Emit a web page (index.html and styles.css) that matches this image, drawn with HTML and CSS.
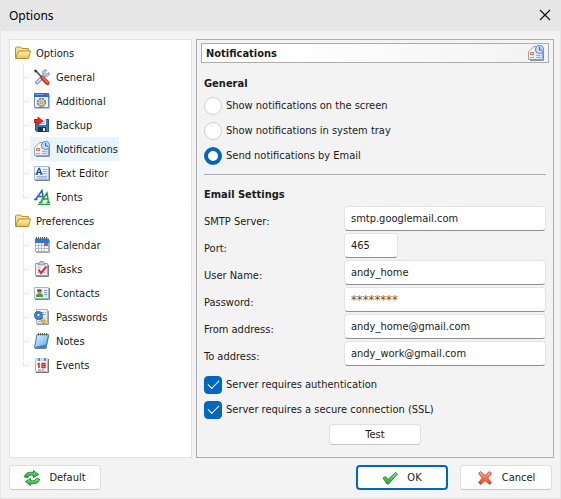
FILE: index.html
```html
<!DOCTYPE html>
<html lang="en">
<head>
<meta charset="utf-8">
<title>Options</title>
<link rel="stylesheet" href="styles.css">
</head>
<body>
<svg class="defs" aria-hidden="true">
  <defs>
    <linearGradient id="gFolder" x1="0" y1="0" x2="0" y2="1"><stop offset="0" stop-color="#fff3b0"/><stop offset="1" stop-color="#e9c04d"/></linearGradient>
    <linearGradient id="gBlue" x1="0" y1="0" x2="1" y2="1"><stop offset="0" stop-color="#e6f3ff"/><stop offset="1" stop-color="#5aa9ea"/></linearGradient>
    <linearGradient id="gPaper" x1="0" y1="0" x2="1" y2="1"><stop offset="0" stop-color="#fff"/><stop offset="1" stop-color="#d3e2f5"/></linearGradient>
    <linearGradient id="gGreen" x1="0" y1="0" x2="0" y2="1"><stop offset="0" stop-color="#8be58a"/><stop offset="1" stop-color="#23a032"/></linearGradient>
    <linearGradient id="gRed" x1="0" y1="0" x2="0" y2="1"><stop offset="0" stop-color="#ffa68c"/><stop offset="1" stop-color="#ee3f1d"/></linearGradient>
    <symbol id="folder" viewBox="0 0 16 16">
      <path d="M.500 12.500V3L1.500 2H5.500L7 3.500H13.500V6" fill="#f6e08c" stroke="#b8923a"/>
      <path d="M.500 13.500L3.500 6H15.500L13.500 13.500Z" fill="url(#gFolder)" stroke="#b58d2c"/>
    </symbol>
    <symbol id="mail" viewBox="0 0 16 16">
      <path d="M2 15.500H15.500V6" fill="none" stroke="#8b8f96"/>
      <path d="M.500 14.500V6.500L6 1.500H11L14.500 6V14.500Z" fill="url(#gPaper)" stroke="#8ea2c0"/>
      <path d="M2 7H6V10H2Z" fill="#f0803c"/><path d="M3 8.500H5" stroke="#ffd0a8"/>
      <path d="M2 12.500H6M8 10.500H13M8 12.500H13" stroke="#8fb0dc"/>
      <circle cx="11.500" cy="4.500" r="4" fill="#c7dcfb" stroke="#6b92e4" stroke-width="1.200"/>
      <path d="M11.500 2V5H14" fill="none" stroke="#3a5cab"/>
    </symbol>
  </defs>
</svg>
<div class="window">
  <header class="titlebar">
    <h1>Options</h1>
    <button class="close" type="button" aria-label="Close"><svg width="12" height="12" viewBox="0 0 12 12"><path d="M1 1L11 11M11 1L1 11" stroke="#111" stroke-width="1.200"/></svg></button>
  </header>
  <main class="content">
    <nav class="tree" aria-label="Sections">
      <ul class="roots">
        <li>
          <div class="group"><svg class="icon"><use href="#folder"/></svg>Options</div>
          <ul class="children">
            <li><a href="#general"><svg class="icon" viewBox="0 0 16 16"><path d="M10.500 6L3 13.500" stroke="#5c83ad" stroke-width="3.600" stroke-linecap="round"/><path d="M10.500 6L3 13.500" stroke="#cfe2f3" stroke-width="1.800" stroke-linecap="round"/><path d="M15 3.500L12.500 5L11 3.500L12.500 1C9.500.300 7.800 2.500 8.800 5.200L11 7.300C14 7.800 15.900 6 15 3.500Z" fill="#b9d3ec" stroke="#668db8" stroke-width=".800"/><path d="M1 1L8 8.500" stroke="#555" stroke-width="1.800"/><path d="M.800 1.200L2.500 3" stroke="#333" stroke-width="2.400"/><path d="M8.500 9L13.500 14" stroke="#c92e1a" stroke-width="4" stroke-linecap="round"/><path d="M8.700 8.700L13.700 13.600" stroke="#ff6a48" stroke-width="1.700" stroke-linecap="round"/></svg>General</a></li>
            <li><a href="#additional"><svg class="icon" viewBox="0 0 16 16"><path d="M1 15.500H15.500V2" fill="none" stroke="#b9bdc4"/><path d="M.500.500H14.500V14.500H.500Z" fill="#edf4ff" stroke="#6692d4"/><path d="M0 0H15V4H0Z" fill="#2c69d7"/><path d="M1 1H10V2H1Z" fill="#6fa3f5"/><path d="M12 1H14V3H12Z" fill="#f33b1b"/><circle cx="7.500" cy="9.500" r="3.900" fill="#c9bda8" stroke="#7b7060" stroke-width="1.500" stroke-dasharray="2 1.060"/><circle cx="7.500" cy="9.500" r="3.200" fill="#e2d9c8" stroke="#a39781" stroke-width=".700"/><circle cx="7.500" cy="9.500" r="1.200" fill="#fff" stroke="#776b58" stroke-width=".800"/></svg>Additional</a></li>
            <li><a href="#backup"><svg class="icon" viewBox="0 0 16 16"><path d="M1 2H15V15H3L1 13Z" fill="#3277c0"/><path d="M1.500 2.500H14.500V14.500H3L1.500 13Z" fill="none" stroke="#1f528f"/><path d="M4 2H12V8H4Z" fill="#eff5fc"/><path d="M9 4.500H11M6 6.500H11" stroke="#9bb2cc"/><path d="M4 10H12V15H4Z" fill="#263241"/><path d="M9 11H11V14H9Z" fill="#e9eff5"/><path d="M0 2.500H4V0L9 4L4 8V5.500H0Z" fill="#f5291d" stroke="#a5140d" stroke-width=".700"/></svg>Backup</a></li>
            <li><a class="selected" href="#notifications" aria-current="page"><svg class="icon"><use href="#mail"/></svg>Notifications</a></li>
            <li><a href="#text-editor"><svg class="icon" viewBox="0 0 16 16"><path d="M1 15.500H15.500V2" fill="none" stroke="#777d87"/><path d="M.500 1.500H14.500V14.500H.500Z" fill="url(#gPaper)" stroke="#a9b9d0"/><path d="M2.500 9L4.800 3.500H5.500L7.500 9M3.500 7.300H7M1.500 9H4M6.200 9H8.500" fill="none" stroke="#1c4eaa" stroke-width="1.300"/><path d="M9 4.500H13M9 6.500H13M9 8.500H13M2.500 11.500H13M2.500 13H13" stroke="#91abd0" stroke-width=".900"/></svg>Text Editor</a></li>
            <li><a href="#fonts"><svg class="icon" viewBox="0 0 16 16"><path d="M1.500 10.500L8 1.500L9.500 10.500M3.800 7.500H9M0 10.500H3.500M7.500 10.500H10.500" fill="none" stroke="#2462c8" stroke-width="1.500"/><path d="M6.500 13.500L13 4L14.500 13.500M8.500 10H14M5 13.500H8.500M12.500 13.500H16M4 15.500H16" fill="none" stroke="#19a63c" stroke-width="1.500"/></svg>Fonts</a></li>
          </ul>
        </li>
        <li>
          <div class="group"><svg class="icon"><use href="#folder"/></svg>Preferences</div>
          <ul class="children">
            <li><a href="#calendar"><svg class="icon" viewBox="0 0 16 16"><path d="M2 15.500H15.500V3" fill="none" stroke="#a5a9b2"/><path d="M1.500 1.500H14.500V14.500H1.500Z" fill="#fff" stroke="#9cb2cf"/><path d="M1 2H15V6H1Z" fill="#2879d8"/><path d="M2.500 0V2.500M4.500 0V2.500M6.500 0V2.500M8.500 0V2.500M10.500 0V2.500M12.500 0V2.500" stroke="#555c69"/><path d="M2 8.500H14M2 11.500H14M4.500 6V14M7.500 6V14M10.500 6V14" stroke="#a9c0df"/><path d="M10 6H14V9H10Z" fill="#ee4b26"/></svg>Calendar</a></li>
            <li><a href="#tasks"><svg class="icon" viewBox="0 0 16 16"><path d="M2 15.500H14.500V4" fill="none" stroke="#777b82"/><path d="M1.500 2.500H13.500V14.500H1.500Z" fill="#eef4fb" stroke="#91a1b4"/><path d="M4 4V2H6V.500H9V2H11V4Z" fill="#cdd4dc" stroke="#747f8c" stroke-width=".700"/><path d="M3.500 6.500H7M3.500 11.500H5M9.500 11.500H12" stroke="#a8bad2"/><path d="M4.500 8.500L7 12L12.500 5.500" fill="none" stroke="#e32a2a" stroke-width="2"/></svg>Tasks</a></li>
            <li><a href="#contacts"><svg class="icon" viewBox="0 0 16 16"><path d="M1 14.500H15.500V3" fill="none" stroke="#7b818a"/><path d="M.500 2.500H14.500V13.500H.500Z" fill="url(#gPaper)" stroke="#a5b7cd"/><path d="M2 12V10L4 8.500H7L9 10V12Z" fill="#35a92f"/><circle cx="5.500" cy="6.800" r="2" fill="#c97946"/><path d="M3.200 7V4.500H7.500V7L6.800 5.800H4.200Z" fill="#55301b"/><path d="M10 5.500H13M10 7.500H13M10 9.500H13" stroke="#7ea3d4"/></svg>Contacts</a></li>
            <li><a href="#passwords"><svg class="icon" viewBox="0 0 16 16"><path d="M3 15.500H14.500V2" fill="none" stroke="#969ca5"/><path d="M2.500.500H13.500V14.500H2.500Z" fill="url(#gPaper)" stroke="#a5b3c6"/><path d="M8 3.500H10M11 3.500H12M9 5.500H12M4 12.500H7" stroke="#8caad2"/><path d="M6 8L11 14" stroke="#966d14" stroke-width="3"/><path d="M6 8L11 14M9 10.500L11 9M10.500 13L12.500 11.500" stroke="#f5c84b" stroke-width="1.600"/><circle cx="4.500" cy="6.500" r="4" fill="#4e8edb" stroke="#2459a4"/><circle cx="4.500" cy="6" r="1.800" fill="#d4e9ff" stroke="#276bbf"/></svg>Passwords</a></li>
            <li><a href="#notes"><svg class="icon" viewBox="0 0 16 16"><path d="M1 15.500H12L14.500 3" fill="none" stroke="#777e88"/><path d="M3 1.500H14.500L12 14.500H.500Z" fill="url(#gBlue)" stroke="#3c7ec4"/><path d="M1 14L12 11.500L11.500 14Z" fill="#2d86dc"/><path d="M4.500 0V2.500M6.500 0V2.500M8.500 0V2.500M10.500 0V2.500M12.500 0V2.500" stroke="#6b6340"/></svg>Notes</a></li>
            <li><a href="#events"><svg class="icon" viewBox="0 0 16 16"><path d="M2 15.500H14.500V2" fill="none" stroke="#6f747c"/><path d="M1.500 1.500H13.500V14.500H1.500Z" fill="#f7fbff" stroke="#a8bbd2"/><path d="M1 1H14V4H1Z" fill="#c8d9ed"/><path d="M4 1H6V4H4ZM10 1H12V4H10Z" fill="#6e8bac"/><path d="M3.500 7L5 6.500V11" fill="none" stroke="#e32626" stroke-width="1.500"/><path d="M8 6.500H11V10.500H8ZM8 8.500H11" fill="none" stroke="#e32626" stroke-width="1.300"/><path d="M4 13H7M8 13H10" stroke="#a82828" stroke-width=".800"/></svg>Events</a></li>
          </ul>
        </li>
      </ul>
    </nav>
    <section class="panel">
      <div class="panel-head"><h2>Notifications</h2><svg class="icon"><use href="#mail"/></svg></div>
      <form class="form" id="settings">
        <h3>General</h3>
        <label class="choice"><input type="radio" name="mode">Show notifications on the screen</label>
        <label class="choice"><input type="radio" name="mode">Show notifications in system tray</label>
        <label class="choice"><input type="radio" name="mode" checked>Send notifications by Email</label>
        <hr>
        <h3>Email Settings</h3>
        <div class="fields">
          <label for="smtp">SMTP Server:</label><input id="smtp" type="text" value="smtp.googlemail.com">
          <label for="port">Port:</label><input id="port" class="short" type="text" value="465">
          <label for="user">User Name:</label><input id="user" type="text" value="andy_home">
          <label for="pass">Password:</label><input id="pass" class="secret" type="text" value="********">
          <label for="from">From address:</label><input id="from" type="text" value="andy_home@gmail.com">
          <label for="to">To address:</label><input id="to" type="text" value="andy_work@gmail.com">
        </div>
        <label class="choice"><input type="checkbox" checked>Server requires authentication</label>
        <label class="choice"><input type="checkbox" checked>Server requires a secure connection (SSL)</label>
        <button class="btn test" type="button">Test</button>
      </form>
    </section>
  </main>
  <footer class="footer">
    <button class="btn" type="button"><svg class="icon" viewBox="0 0 16 16"><path d="M.500 7C1 3.500 4 1.500 9.500 2.500V.500L14.500 4.500L9.500 7.500V5.500C6.500 4.500 4.500 5.500 4 7.500Z" fill="url(#gGreen)" stroke="#16812a" stroke-width=".900"/><path d="M15.500 9C15 12.500 12 14.500 6.500 13.500V15.500L1.500 11.500L6.500 8.500V10.500C9.500 11.500 11.500 10.500 12 8.500Z" fill="url(#gGreen)" stroke="#16812a" stroke-width=".900"/></svg>Default</button>
    <button class="btn primary" type="submit" form="settings"><svg class="icon" viewBox="0 0 16 16"><path d="M1 8L3.500 6.500L6 9.500L13.500 2.500L15.500 4L6.500 14H5Z" fill="url(#gGreen)" stroke="#16812a" stroke-width=".900"/></svg>OK</button>
    <button class="btn" type="button"><svg class="icon" viewBox="0 0 16 16"><path d="M1.500 3.500L3.500 1.500L8 5.500L12.500 1.500L14.500 3.500L10.700 8L14.500 12.500L12.500 14.500L8 10.500L3.500 14.500L1.500 12.500L5.300 8Z" fill="url(#gRed)" stroke="#d04a2e" stroke-width=".900"/></svg>Cancel</button>
  </footer>
</div>
</body>
</html>
```
FILE: styles.css
```css
* { box-sizing: border-box; }

body {
  margin: 0;
  background: #f3f3f3;
  color: #1a1a1a;
  font: 11px/17px "DejaVu Sans Condensed", "DejaVu Sans", sans-serif;
}

button, input { font: inherit; color: inherit; }
ul { list-style: none; margin: 0; padding: 0; }
a { color: inherit; text-decoration: none; }
h1, h2, h3 { margin: 0; font-size: inherit; }

.defs { position: absolute; width: 0; height: 0; }
.icon { flex: none; width: 16px; height: 16px; }

.window {
  display: flex;
  flex-direction: column;
  min-height: 100vh;
  border: 1px solid #e6e6e6;
  border-top: 0;
}

.titlebar {
  display: flex;
  align-items: center;
  justify-content: space-between;
  height: 31px;
  padding: 0 7px 0 8px;
  background: #e6e6e6;
  color: #000;
}
.titlebar h1 { font: 12px/16px "Noto Sans", sans-serif; }
.close { display: flex; padding: 0 2px 2px; border: 0; background: none; }

.content {
  display: grid;
  grid-template-columns: 183px 1fr;
  gap: 4px;
  flex: 1;
  padding: 8px 6px 0 8px;
}

.tree { padding: 1px 5px; border: 1px solid #e3e3e3; background: #fff; }
.group { display: flex; align-items: center; gap: 5px; height: 24px; }
.children { margin-left: 8px; }
.children li {
  display: flex;
  align-items: center;
  height: 24px;
  background: repeating-linear-gradient(#dcdcdc 0 1px, #fff 1px 2px) left top / 1px 100% no-repeat;
}
.children li:last-child { background-size: 1px 50%; }
.children li::before { content: ""; width: 6px; border-top: 1px dotted #dcdcdc; }
.children li a { display: flex; align-items: center; gap: 6px; height: 24px; margin-left: 1px; padding: 0 1px 0 4px; }
.children .selected { background: #e9f5fe; }

.panel { padding: 3px 4px 10px; border: 1px solid #adadad; }
.panel-head {
  display: flex;
  align-items: center;
  justify-content: space-between;
  height: 20px;
  padding: 0 4px;
  border: 1px solid #adadad;
  background: linear-gradient(90deg, #fff 20%, #f3f3f3);
}
h2, h3 { font-weight: bold; }

.form { display: flex; flex-direction: column; padding: 10px 3px 0; }
.form h3 { height: 20px; line-height: 21px; }
.form hr { width: 100%; margin: 6px 0 9px; border: 0; border-top: 1px solid #adadad; }

.choice { display: flex; align-items: center; gap: 4px; height: 25px; }
.choice input {
  appearance: none;
  flex: none;
  width: 18px;
  height: 18px;
  margin: 0;
  border: 1px solid #d0d0d0;
  background: #fff;
}
.choice input[type="radio"] { border-radius: 50%; }
.choice input[type="radio"]:checked { border: 4px solid #0067c0; }
.choice input[type="checkbox"] { display: grid; place-items: center; border-color: #0067c0; border-radius: 4px; background: #0067c0; }
.choice input[type="checkbox"]::before {
  content: "";
  width: 10px;
  height: 5px;
  margin-bottom: 3px;
  border: solid #fff;
  border-width: 0 0 1px 1px;
  rotate: -45deg;
}

.fields {
  display: grid;
  grid-template-columns: 140px 1fr;
  row-gap: 2px;
  padding: 2px 0 6px;
}
.fields label { padding-top: 7px; }
.fields input {
  width: 100%;
  height: 25px;
  padding: 0 6px;
  border: 1px solid #e3e3e3;
  border-bottom-color: #8f8f8f;
  border-radius: 4px;
  background: #fff;
}
.fields .short { width: 54px; }
.fields .secret { color: #8a4418; font-size: 13px; }

.btn {
  display: flex;
  align-items: center;
  justify-content: center;
  gap: 9px;
  width: 92px;
  height: 25px;
  padding: 0;
  border: 1px solid #dfdfdf;
  border-bottom-color: #c6c6c6;
  border-radius: 4px;
  background: #fff;
}
.test { align-self: center; height: 21px; margin-top: 2px; }
.primary { margin-left: auto; border: 2px solid #0067c0; }

.footer { display: flex; gap: 12px; padding: 7px 8px 8px; }
```
